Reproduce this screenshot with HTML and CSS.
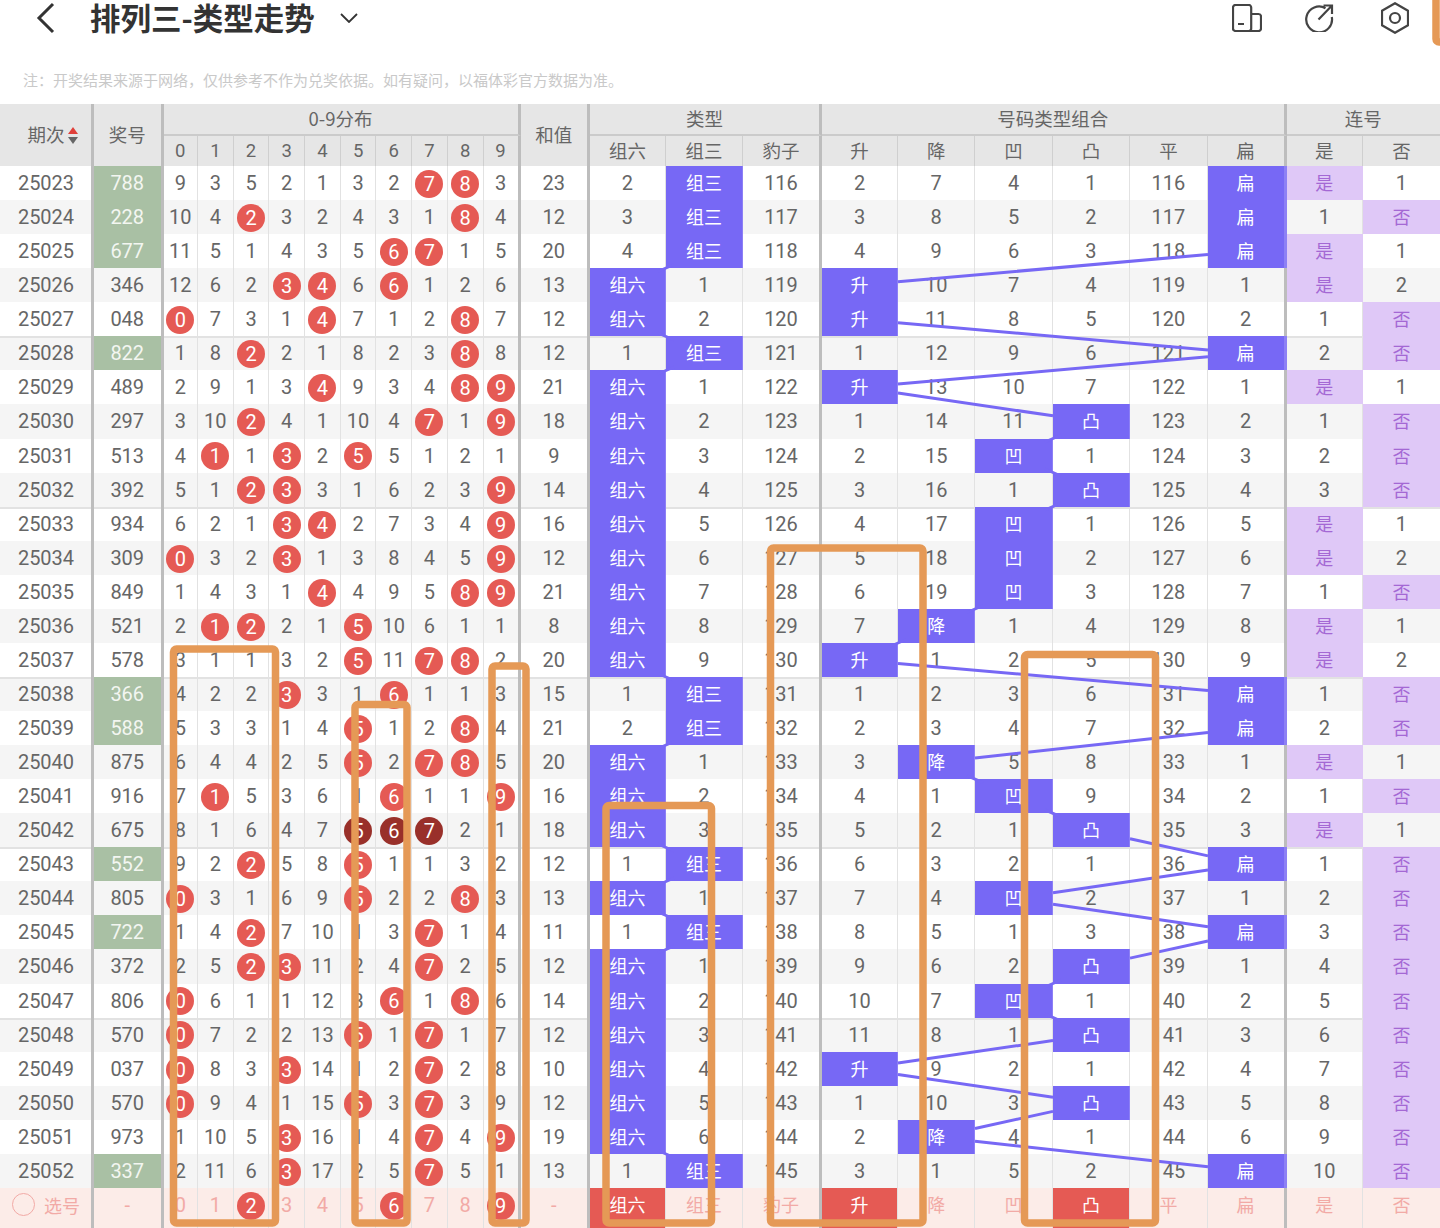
FILE: index.html
```html
<!DOCTYPE html>
<html lang="zh-CN">
<head>
<meta charset="utf-8">
<title>排列三-类型走势</title>
<link rel="stylesheet" href="styles.css">
</head>
<body>
<div class="page">
<header class="bar">
<svg class="back" width="20" height="32" viewBox="0 0 20 32"><path d="M17 2 3 16l14 14"/></svg>
<h1 class="title">排列三-类型走势</h1>
<svg class="caret" width="18" height="10" viewBox="0 0 18 10"><path d="M1 1l8 8 8-8"/></svg>
<div class="tools">
<svg class="tool" width="30" height="28" viewBox="0 0 30 28"><path d="M3.5 1h13.2a2.5 2.5 0 0 1 2.5 2.5v21a2.5 2.5 0 0 1-2.5 2.5H3.5A2.5 2.5 0 0 1 1 24.500v-21A2.500 2.500 0 0 1 3.500 1zM19.200 10h7.300a2.500 2.500 0 0 1 2.500 2.500v12a2.500 2.500 0 0 1-2.500 2.500h-9.800M6 20h6"/></svg>
<svg class="tool mid" width="30" height="28" viewBox="0 0 30 28"><path d="M21.500 4.200A12.900 12.900 0 1 0 27.800 13M14.500 15.500 27.500 2M19.500 1.500h8.500v8.500"/></svg>
<svg class="tool" width="28" height="32" viewBox="0 0 28 32"><path d="M14 1.200 27 8.700v14.600l-13 7.500-13-7.500V8.700z"/><circle cx="14" cy="16" r="5"/></svg>
</div>
</header>
<p class="note">注：开奖结果来源于网络，仅供参考不作为兑奖依据。如有疑问，以福体彩官方数据为准。</p>
<table class="chart">
<colgroup><col class="c94"><col class="c69"><col class="c34"><col class="c36" span="8"><col class="c37"><col class="c69b"><col class="c76"><col class="c77"><col class="c79"><col class="c76"><col class="c77b" span="4"><col class="c79"><col class="c76b"><col class="c77"></colgroup>
<thead>
<tr><th rowspan="2" class="k sort">期次<svg class="arrows" width="10" height="17" viewBox="0 0 10 17"><path class="up" d="M5 0l5 7H0z"/><path class="down" d="M0 10h10l-5 7z"/></svg><th rowspan="2" class="k">奖号<th colspan="10" class="k g">0-9分布<th rowspan="2" class="k">和值<th colspan="3" class="k g">类型<th colspan="6" class="k g">号码类型组合<th colspan="2" class="g">连号
<tr class="sub"><th>0<th>1<th>2<th>3<th>4<th>5<th>6<th>7<th>8<th class="k">9<th>组六<th>组三<th class="k">豹子<th>升<th>降<th>凹<th>凸<th>平<th class="k">扁<th>是<th>否
</thead>
<tbody>
<tr><td>25023<td class="w">788<td>9<td>3<td>5<td>2<td>1<td>3<td>2<td><b>7</b><td><b>8</b><td>3<td>23<td>2<td class="p">组三<td>116<td>2<td>7<td>4<td>1<td>116<td class="p">扁<td class="l">是<td>1
<tr><td>25024<td class="w">228<td>10<td>4<td><b>2</b><td>3<td>2<td>4<td>3<td>1<td><b>8</b><td>4<td>12<td>3<td class="p">组三<td>117<td>3<td>8<td>5<td>2<td>117<td class="p">扁<td>1<td class="l">否
<tr><td>25025<td class="w">677<td>11<td>5<td>1<td>4<td>3<td>5<td><b>6</b><td><b>7</b><td>1<td>5<td>20<td>4<td class="p">组三<td>118<td>4<td>9<td>6<td>3<td>118<td class="p">扁<td class="l">是<td>1
<tr><td>25026<td>346<td>12<td>6<td>2<td><b>3</b><td><b>4</b><td>6<td><b>6</b><td>1<td>2<td>6<td>13<td class="p">组六<td>1<td>119<td class="p">升<td>10<td>7<td>4<td>119<td>1<td class="l">是<td>2
<tr><td>25027<td>048<td><b>0</b><td>7<td>3<td>1<td><b>4</b><td>7<td>1<td>2<td><b>8</b><td>7<td>12<td class="p">组六<td>2<td>120<td class="p">升<td>11<td>8<td>5<td>120<td>2<td>1<td class="l">否
<tr><td>25028<td class="w">822<td>1<td>8<td><b>2</b><td>2<td>1<td>8<td>2<td>3<td><b>8</b><td>8<td>12<td>1<td class="p">组三<td>121<td>1<td>12<td>9<td>6<td>121<td class="p">扁<td>2<td class="l">否
<tr><td>25029<td>489<td>2<td>9<td>1<td>3<td><b>4</b><td>9<td>3<td>4<td><b>8</b><td><b>9</b><td>21<td class="p">组六<td>1<td>122<td class="p">升<td>13<td>10<td>7<td>122<td>1<td class="l">是<td>1
<tr><td>25030<td>297<td>3<td>10<td><b>2</b><td>4<td>1<td>10<td>4<td><b>7</b><td>1<td><b>9</b><td>18<td class="p">组六<td>2<td>123<td>1<td>14<td>11<td class="p">凸<td>123<td>2<td>1<td class="l">否
<tr><td>25031<td>513<td>4<td><b>1</b><td>1<td><b>3</b><td>2<td><b>5</b><td>5<td>1<td>2<td>1<td>9<td class="p">组六<td>3<td>124<td>2<td>15<td class="p">凹<td>1<td>124<td>3<td>2<td class="l">否
<tr><td>25032<td>392<td>5<td>1<td><b>2</b><td><b>3</b><td>3<td>1<td>6<td>2<td>3<td><b>9</b><td>14<td class="p">组六<td>4<td>125<td>3<td>16<td>1<td class="p">凸<td>125<td>4<td>3<td class="l">否
<tr><td>25033<td>934<td>6<td>2<td>1<td><b>3</b><td><b>4</b><td>2<td>7<td>3<td>4<td><b>9</b><td>16<td class="p">组六<td>5<td>126<td>4<td>17<td class="p">凹<td>1<td>126<td>5<td class="l">是<td>1
<tr><td>25034<td>309<td><b>0</b><td>3<td>2<td><b>3</b><td>1<td>3<td>8<td>4<td>5<td><b>9</b><td>12<td class="p">组六<td>6<td>127<td>5<td>18<td class="p">凹<td>2<td>127<td>6<td class="l">是<td>2
<tr><td>25035<td>849<td>1<td>4<td>3<td>1<td><b>4</b><td>4<td>9<td>5<td><b>8</b><td><b>9</b><td>21<td class="p">组六<td>7<td>128<td>6<td>19<td class="p">凹<td>3<td>128<td>7<td>1<td class="l">否
<tr><td>25036<td>521<td>2<td><b>1</b><td><b>2</b><td>2<td>1<td><b>5</b><td>10<td>6<td>1<td>1<td>8<td class="p">组六<td>8<td>129<td>7<td class="p">降<td>1<td>4<td>129<td>8<td class="l">是<td>1
<tr><td>25037<td>578<td>3<td>1<td>1<td>3<td>2<td><b>5</b><td>11<td><b>7</b><td><b>8</b><td>2<td>20<td class="p">组六<td>9<td>130<td class="p">升<td>1<td>2<td>5<td>130<td>9<td class="l">是<td>2
<tr><td>25038<td class="w">366<td>4<td>2<td>2<td><b>3</b><td>3<td>1<td><b>6</b><td>1<td>1<td>3<td>15<td>1<td class="p">组三<td>131<td>1<td>2<td>3<td>6<td>131<td class="p">扁<td>1<td class="l">否
<tr><td>25039<td class="w">588<td>5<td>3<td>3<td>1<td>4<td><b>5</b><td>1<td>2<td><b>8</b><td>4<td>21<td>2<td class="p">组三<td>132<td>2<td>3<td>4<td>7<td>132<td class="p">扁<td>2<td class="l">否
<tr><td>25040<td>875<td>6<td>4<td>4<td>2<td>5<td><b>5</b><td>2<td><b>7</b><td><b>8</b><td>5<td>20<td class="p">组六<td>1<td>133<td>3<td class="p">降<td>5<td>8<td>133<td>1<td class="l">是<td>1
<tr><td>25041<td>916<td>7<td><b>1</b><td>5<td>3<td>6<td>1<td><b>6</b><td>1<td>1<td><b>9</b><td>16<td class="p">组六<td>2<td>134<td>4<td>1<td class="p">凹<td>9<td>134<td>2<td>1<td class="l">否
<tr><td>25042<td>675<td>8<td>1<td>6<td>4<td>7<td><b class="dk">5</b><td><b class="dk">6</b><td><b class="dk">7</b><td>2<td>1<td>18<td class="p">组六<td>3<td>135<td>5<td>2<td>1<td class="p">凸<td>135<td>3<td class="l">是<td>1
<tr><td>25043<td class="w">552<td>9<td>2<td><b>2</b><td>5<td>8<td><b>5</b><td>1<td>1<td>3<td>2<td>12<td>1<td class="p">组三<td>136<td>6<td>3<td>2<td>1<td>136<td class="p">扁<td>1<td class="l">否
<tr><td>25044<td>805<td><b>0</b><td>3<td>1<td>6<td>9<td><b>5</b><td>2<td>2<td><b>8</b><td>3<td>13<td class="p">组六<td>1<td>137<td>7<td>4<td class="p">凹<td>2<td>137<td>1<td>2<td class="l">否
<tr><td>25045<td class="w">722<td>1<td>4<td><b>2</b><td>7<td>10<td>1<td>3<td><b>7</b><td>1<td>4<td>11<td>1<td class="p">组三<td>138<td>8<td>5<td>1<td>3<td>138<td class="p">扁<td>3<td class="l">否
<tr><td>25046<td>372<td>2<td>5<td><b>2</b><td><b>3</b><td>11<td>2<td>4<td><b>7</b><td>2<td>5<td>12<td class="p">组六<td>1<td>139<td>9<td>6<td>2<td class="p">凸<td>139<td>1<td>4<td class="l">否
<tr><td>25047<td>806<td><b>0</b><td>6<td>1<td>1<td>12<td>3<td><b>6</b><td>1<td><b>8</b><td>6<td>14<td class="p">组六<td>2<td>140<td>10<td>7<td class="p">凹<td>1<td>140<td>2<td>5<td class="l">否
<tr><td>25048<td>570<td><b>0</b><td>7<td>2<td>2<td>13<td><b>5</b><td>1<td><b>7</b><td>1<td>7<td>12<td class="p">组六<td>3<td>141<td>11<td>8<td>1<td class="p">凸<td>141<td>3<td>6<td class="l">否
<tr><td>25049<td>037<td><b>0</b><td>8<td>3<td><b>3</b><td>14<td>1<td>2<td><b>7</b><td>2<td>8<td>10<td class="p">组六<td>4<td>142<td class="p">升<td>9<td>2<td>1<td>142<td>4<td>7<td class="l">否
<tr><td>25050<td>570<td><b>0</b><td>9<td>4<td>1<td>15<td><b>5</b><td>3<td><b>7</b><td>3<td>9<td>12<td class="p">组六<td>5<td>143<td>1<td>10<td>3<td class="p">凸<td>143<td>5<td>8<td class="l">否
<tr><td>25051<td>973<td>1<td>10<td>5<td><b>3</b><td>16<td>1<td>4<td><b>7</b><td>4<td><b>9</b><td>19<td class="p">组六<td>6<td>144<td>2<td class="p">降<td>4<td>1<td>144<td>6<td>9<td class="l">否
<tr><td>25052<td class="w">337<td>2<td>11<td>6<td><b>3</b><td>17<td>2<td>5<td><b>7</b><td>5<td>1<td>13<td>1<td class="p">组三<td>145<td>3<td>1<td>5<td>2<td>145<td class="p">扁<td>10<td class="l">否
<tr class="pick"><td><span class="pick-id"><i class="ring"></i>选号</span><td>-<td>0<td>1<td><b>2</b><td>3<td>4<td>5<td><b>6</b><td>7<td>8<td><b>9</b><td>-<td class="r">组六<td class="z">组三<td class="z">豹子<td class="r">升<td class="z">降<td class="z">凹<td class="r">凸<td class="z">平<td class="z">扁<td class="z">是<td class="z">否
</tbody>
</table>
<svg class="overlay" width="1440" height="1228" viewBox="0 0 1440 1228">
<path class="trend" d="M1208 254.400 898 281.800M898 322.700 1208 350M1208 356.800 898 384M898 393.100 1053 415.800M1061 435l-16 7M1045 469l16 7M1061 503l-16 7M967 612.500l16-7M890 646.500l16-7M898 663.400 1208 690.600M1208 732.400 975 757.900M967 775.700l16 7M1045 809.800l16 7M1130 838.800 1208 855.900M1208 870.100 1053 892.800M1053 904.200 1208 926.800M1208 941 1130 958.100M1061 980l-16 7M1045 1014l16 7M1053 1040.500 898 1063.100M898 1074.500 1053 1097.200M1053 1111.400 975 1128.500M975 1141.300 1208 1166.800"/>
<path class="trend" d="M674 264.500l-16 7M658 333l16 7M674 367l-16 7M658 673.500l16 7M674 741.500l-16 7M658 844l16 7M674 878l-16 7M658 912l16 7M674 946l-16 7M658 1150.500l16 7"/>
<rect class="box" x="173.500" y="649" width="102" height="574" rx="3"/>
<rect class="box" x="355" y="704.500" width="52" height="518.500" rx="3"/>
<rect class="box" x="492" y="666" width="34" height="557" rx="3"/>
<rect class="box" x="606" y="805.500" width="105.500" height="417.500" rx="3"/>
<rect class="box" x="770.500" y="548" width="152.500" height="675" rx="3"/>
<rect class="box" x="1024.500" y="654.500" width="131" height="568.500" rx="3"/>
<rect class="box" x="1436" y="-30" width="60" height="72" rx="3"/>
</svg>
</div>
</body>
</html>
```

FILE: styles.css
```css
* { box-sizing: border-box; }
html, body { margin: 0; padding: 0; background: #fff; }
.page {
  position: relative;
  width: 1440px;
  height: 1228px;
  overflow: hidden;
  font-family: Roboto, "Noto Sans CJK SC", sans-serif;
  color: #666;
}
.bar {
  display: flex;
  align-items: center;
  height: 36px;
  padding-left: 36px;
}
.back { fill: none; stroke: #333; stroke-width: 3; flex: none; }
.title {
  align-self: flex-start;
  margin: 0 0 0 34px;
  font-family: "Noto Sans CJK SC", sans-serif;
  font-size: 30.5px;
  font-weight: 700;
  line-height: 34px;
  color: #333;
  white-space: nowrap;
}
.caret { margin: 0 0 0 25px; fill: none; stroke: #333; stroke-width: 1.8; flex: none; }
.tools {
  display: flex;
  align-items: center;
  margin-left: auto;
  padding-right: 31px;
  gap: 42px;
}
.tool { fill: none; stroke: #444; stroke-width: 2.2; flex: none; }
.tool.mid { margin-right: 5px; }
.note {
  display: flex;
  align-items: flex-end;
  height: 68px;
  margin: 0;
  padding: 0 0 13px 23px;
  font-family: "Noto Sans CJK SC", sans-serif;
  font-size: 15px;
  line-height: 22px;
  color: #c9c9c9;
  white-space: nowrap;
}
.chart {
  table-layout: fixed;
  width: 1440px;
  border-collapse: separate;
  border-spacing: 0;
  font-size: 20px;
}
.c94 { width: 94px; }
.c69 { width: 69.5px; }
.c34 { width: 34.5px; }
.c36 { width: 35.7px; }
.c37 { width: 37px; }
.c69b { width: 69.4px; }
.c76 { width: 76px; }
.c77 { width: 77px; }
.c79 { width: 79px; }
.c77b { width: 77.4px; }
.c76b { width: 76.4px; }

th {
  height: 32px;
  padding: 0 0 2px;
  background: #e6e6e6;
  font-family: "Noto Sans CJK SC", sans-serif;
  font-size: 18.5px;
  font-weight: 400;
  line-height: 28px;
  color: #666;
  text-align: center;
  border-right: 1px solid #cfcfcf;
}
th.g { border-bottom: 2px solid #cbcbcb; }
th.k { border-right: 3px solid #bdbdbd; }
.sub th { height: 30px; padding-bottom: 0; line-height: 26px; font-family: Roboto, "Noto Sans CJK SC", sans-serif; }
.sub th:nth-child(n+11) { padding-bottom: 2px; font-family: "Noto Sans CJK SC", sans-serif; }
th:last-child { border-right: 0; }
.sort { padding-left: 14px; }
.arrows { margin-left: 3px; vertical-align: -2px; }
.up { fill: #e0403a; }
.down { fill: #666; }

td {
  height: 34.07px;
  padding: 0;
  text-align: center;
  vertical-align: middle;
  line-height: 28px;
  border-right: 1px solid #e2e2e2;
  background: #fff;
}
td:first-child { padding-left: 1px; }
tbody tr:nth-child(even) td { background: #f5f5f5; }
tbody tr:nth-child(5n+1) td { box-shadow: inset 0 2px 0 #e2e2e2; }
tbody tr:first-child td { box-shadow: none; }
td:nth-child(1), td:nth-child(2), td:nth-child(12), td:nth-child(13), td:nth-child(16), td:nth-child(22) {
  border-right: 3px solid #bdbdbd;
}
td:last-child { border-right: 0; }

b {
  display: inline-block;
  width: 28px;
  height: 28px;
  border-radius: 50%;
  background: #e55a54;
  color: #fff;
  font-weight: 400;
  line-height: 28px;
  vertical-align: middle;
}
b.dk { background: #99302a; }

.chart tbody td.w { background: #a9c0a4; color: #f3f6f1; box-shadow: none; }
.chart tbody td.p, .chart tbody td.l, .chart tbody td.r, .chart tbody td.z {
  padding-bottom: 2px;
  font-family: "Noto Sans CJK SC", sans-serif;
  font-size: 18px;
}
.chart tbody td.p { background: #7768f5; color: #fff; box-shadow: none; border-right-color: #8d80f5; }
.chart tbody td.l { background: #dfc8f7; color: #a468d4; box-shadow: none; border-right-color: #dfc8f7; }

.chart tbody tr.pick td {
  height: 40px;
  padding-bottom: 6px;
  background: #fcece8;
  color: #f2aaa6;
  box-shadow: none;
}
.chart tbody tr.pick td.z { padding-bottom: 8px; }
.chart tbody tr.pick td.r { padding-bottom: 8px; background: #e55a54; color: #fff; }
.pick-id {
  display: flex;
  align-items: center;
  gap: 9px;
  padding-left: 11px;
  font-family: "Noto Sans CJK SC", sans-serif;
  font-size: 18px;
}
.ring {
  display: block;
  width: 23px;
  height: 23px;
  border: 1.5px solid #f2aaa6;
  border-radius: 50%;
  flex: none;
}
.overlay { position: absolute; left: 0; top: 0; pointer-events: none; }
.trend { fill: none; stroke: #7768f5; stroke-width: 3; }
.box { fill: none; stroke: #e59956; stroke-width: 7.5; }
```
